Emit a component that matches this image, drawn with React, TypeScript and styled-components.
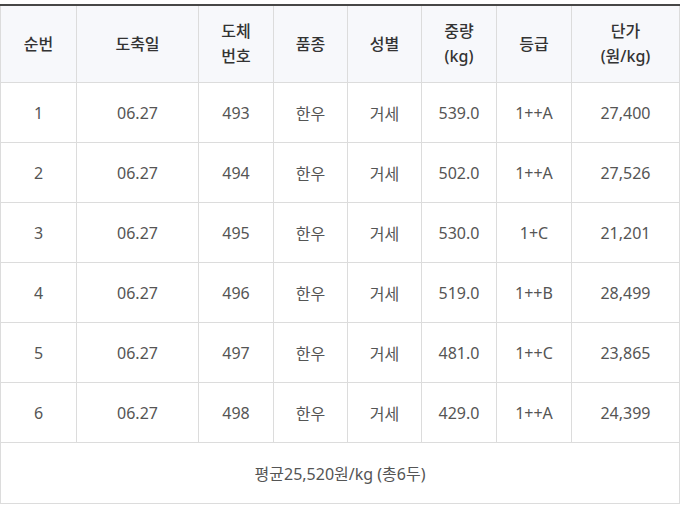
import styled, { createGlobalStyle } from 'styled-components';

const GlobalStyle = createGlobalStyle`
  html, body {
    margin: 0;
    padding: 0;
    background: #ffffff;
  }
  body {
    font-family: 'Noto Sans', 'Noto Sans CJK KR', sans-serif;
    color: #333333;
  }
`;

const Wrapper = styled.div`
  padding-top: 4px;
  width: 679px;
`;

const Table = styled.table`
  width: 679px;
  border-collapse: collapse;
  table-layout: fixed;
  border-top: 2px solid #474747;
  font-size: 16px;
`;

const HeadCell = styled.th`
  height: 76px;
  padding: 0;
  background: #f7f8fb;
  border: 1px solid #dcdcdc;
  border-top: none;
  font-weight: 500;
  line-height: 25px;
  text-align: center;
  color: #333333;
`;

const Cell = styled.td`
  height: 58px;
  padding: 1px 0 0;
  border: 1px solid #dcdcdc;
  text-align: center;
  color: #555555;
  font-weight: 400;
`;

const Summary = styled.td`
  height: 60px;
  padding: 0;
  border: 1px solid #dcdcdc;
  text-align: center;
  color: #555555;
  font-weight: 400;
`;

const columns: { label: string[]; width: number }[] = [
  { label: ['순번'], width: 76 },
  { label: ['도축일'], width: 122 },
  { label: ['도체', '번호'], width: 75 },
  { label: ['품종'], width: 74 },
  { label: ['성별'], width: 74 },
  { label: ['중량', '(kg)'], width: 75 },
  { label: ['등급'], width: 75 },
  { label: ['단가', '(원/kg)'], width: 108 },
];

const rows = [
  ['1', '06.27', '493', '한우', '거세', '539.0', '1++A', '27,400'],
  ['2', '06.27', '494', '한우', '거세', '502.0', '1++A', '27,526'],
  ['3', '06.27', '495', '한우', '거세', '530.0', '1+C', '21,201'],
  ['4', '06.27', '496', '한우', '거세', '519.0', '1++B', '28,499'],
  ['5', '06.27', '497', '한우', '거세', '481.0', '1++C', '23,865'],
  ['6', '06.27', '498', '한우', '거세', '429.0', '1++A', '24,399'],
];

const App: React.FC = () => {
  return (
    <Wrapper>
      <GlobalStyle />
      <Table>
        <colgroup>
          {columns.map((c, i) => (
            <col key={i} style={{ width: c.width }} />
          ))}
        </colgroup>
        <thead>
          <tr>
            {columns.map((c, i) => (
              <HeadCell key={i}>
                {c.label.map((l, j) => (
                  <div key={j}>{l}</div>
                ))}
              </HeadCell>
            ))}
          </tr>
        </thead>
        <tbody>
          {rows.map((r, i) => (
            <tr key={i}>
              {r.map((v, j) => (
                <Cell key={j}>{v}</Cell>
              ))}
            </tr>
          ))}
          <tr>
            <Summary colSpan={8}>평균25,520원/kg (총6두)</Summary>
          </tr>
        </tbody>
      </Table>
    </Wrapper>
  );
};

export default App;
